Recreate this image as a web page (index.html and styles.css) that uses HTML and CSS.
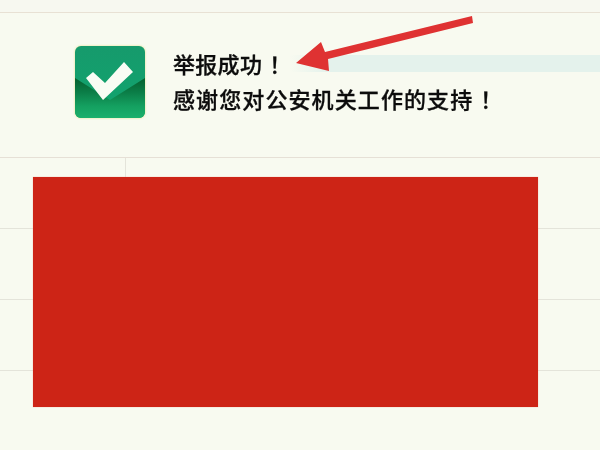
FILE: index.html
```html
<!DOCTYPE html>
<html lang="zh-CN">
<head>
<meta charset="utf-8">
<title>举报成功</title>
<link rel="stylesheet" href="styles.css">
</head>
<body>
<div class="page">
  <div class="topbar"></div>
  <section class="notice">
    <svg class="badge" viewBox="0 0 70 72" width="70" height="72" aria-hidden="true">
      <defs>
        <linearGradient id="top" x1="0" y1="0" x2="0" y2="1">
          <stop offset="0" stop-color="#169a6c"/>
          <stop offset="1" stop-color="#10a56e"/>
        </linearGradient>
        <linearGradient id="low" x1="0" y1="0" x2="0" y2="1">
          <stop offset="0" stop-color="#05602f"/>
          <stop offset="0.35" stop-color="#0b7d47"/>
          <stop offset="0.7" stop-color="#14a060"/>
          <stop offset="1" stop-color="#1cb06c"/>
        </linearGradient>
      </defs>
      <rect width="70" height="72" rx="6" fill="url(#top)"/>
      <path d="M0 32 L35 54 L70 32 V66 a6 6 0 0 1 -6 6 H6 a6 6 0 0 1 -6 -6 Z" fill="url(#low)"/>
      <path d="M11 32 L18 26 L30 37 L49 16 L58 26 L28 54 Z" fill="#f8fcf4"/>
    </svg>
    <div class="message">
      <p class="title">举报成功<span class="bang">！</span></p>
      <p class="thanks">感谢您对公安机关工作的支持<span class="bang">！</span></p>
    </div>
    <svg class="arrow" viewBox="0 0 180 70" width="180" height="70" aria-hidden="true">
      <path d="M176 13 L177 20 L32 56 L33 68 L0 60 L25 39 L29 49 Z" fill="#df3232"/>
    </svg>
  </section>
  <div class="rows">
    <div class="row"><div class="cell-key"></div></div>
    <div class="row"></div>
    <div class="row"></div>
  </div>
  <div class="cover"></div>
</div>
</body>
</html>
```
FILE: styles.css
```css
* { box-sizing: border-box; }
html, body { margin: 0; padding: 0; }
body { background: #f8faf0; }
.page {
  position: relative;
  width: 600px;
  height: 450px;
  overflow: hidden;
  background: #f8faf0;
  font-family: "Noto Sans CJK SC", "Liberation Sans", sans-serif;
}
.topbar {
  height: 13px;
  background: #f7f8f0;
  border-bottom: 1px solid #e8e1d4;
}
.notice {
  position: relative;
  display: flex;
  align-items: flex-start;
  gap: 28px;
  height: 145px;
  padding: 33px 0 0 75px;
  background: linear-gradient(90deg, #f8faf0, #e4f2ec 12%) no-repeat 290px 42px / 310px 17px;
  border-bottom: 1px solid #e6e0d6;
}
.badge {
  flex: none;
  filter: drop-shadow(0 0 1px #e6e58a) blur(0.4px);
}
.message {
  color: #0c0c0c;
  font-size: 22px;
  font-weight: 500;
  line-height: 35px;
  -webkit-text-stroke: 0.3px #0c0c0c;
  filter: blur(0.5px);
}
.message p { margin: 0; white-space: nowrap; }
.title { letter-spacing: 0.3px; }
.thanks { letter-spacing: 1.1px; }
.bang { margin-left: 7px; font-family: "Noto Sans CJK TC", sans-serif; }
.arrow { position: absolute; left: 296px; top: -10px; filter: blur(0.3px); }
.row {
  height: 71px;
  border-bottom: 1px solid #e4e4da;
}
.cell-key {
  width: 126px;
  height: 20px;
  border-right: 1px solid #e4e4da;
}
.cover {
  position: absolute;
  left: 33px;
  top: 177px;
  width: 505px;
  height: 230px;
  background: #cd2416;
  box-shadow: 0 0 1px #f3a89a;
}
```
